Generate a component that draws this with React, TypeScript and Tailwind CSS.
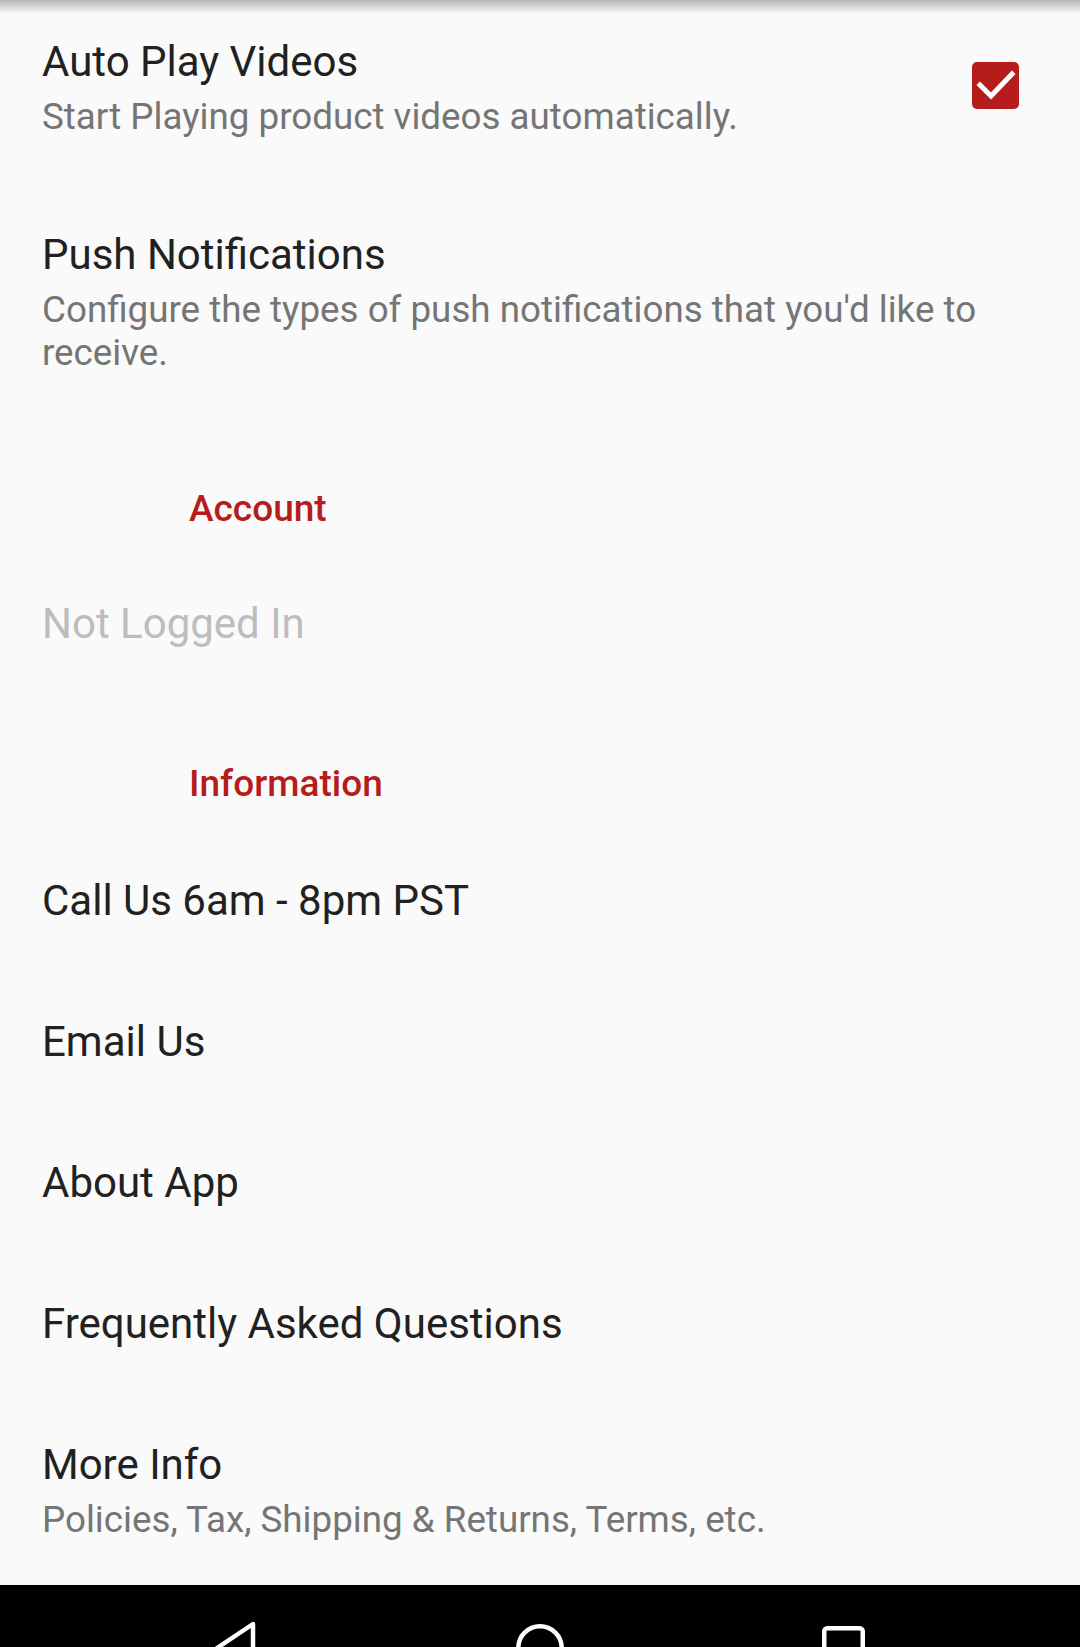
import React from "react";

function Title({ children, muted = false }: { children: React.ReactNode; muted?: boolean }) {
  return (
    <div className={`text-[42px] leading-[49px] ${muted ? "text-[#bdbdbd]" : "text-[#212121]"}`}>
      {children}
    </div>
  );
}

function Summary({ children }: { children: React.ReactNode }) {
  return <div className="mt-[9px] text-[36.75px] leading-[43px] text-[#757575]">{children}</div>;
}

function Category({ children, pt, pb }: { children: React.ReactNode; pt: string; pb: string }) {
  return (
    <div className={`${pt} ${pb} pl-[189px] text-[37px] leading-[43px] font-medium text-[#b71c1c]`}>
      {children}
    </div>
  );
}

function Item({ title }: { title: string }) {
  return (
    <div className="pl-[42px] pr-[100px] pt-[46px] pb-[46px]">
      <Title>{title}</Title>
    </div>
  );
}

export default function App() {
  return (
    <div
      className="relative w-full h-[1647px] overflow-hidden bg-[#fafafa] flex flex-col"
      style={{ fontFamily: "Roboto, 'Noto Sans', sans-serif" }}
    >
      <div className="absolute top-0 left-0 right-0 h-[14px] bg-gradient-to-b from-[rgba(0,0,0,0.28)] to-transparent" />

      {/* Auto Play Videos */}
      <div className="flex pl-[42px] pt-[37px] pb-[46px]">
        <div className="flex-1">
          <Title>Auto Play Videos</Title>
          <Summary>Start Playing product videos automatically.</Summary>
        </div>
        <div className="mt-[25px] mr-[61px] w-[47px] h-[47px] rounded-[5px] bg-[#b71c1c] flex items-center justify-center">
          <svg width="47" height="47" viewBox="0 0 47 47">
            <path d="M8 23 L19 34 L40 12" fill="none" stroke="#ffffff" strokeWidth="5" strokeLinecap="square" strokeLinejoin="miter" />
          </svg>
        </div>
      </div>

      {/* Push Notifications */}
      <div className="pl-[42px] pr-[100px] pt-[46px] pb-[46px]">
        <Title>Push Notifications</Title>
        <Summary>Configure the types of push notifications that you'd like to receive.</Summary>
      </div>

      <Category pt="pt-[67px]" pb="pb-[23px]">Account</Category>

      <div className="pl-[42px] pt-[46px] pb-[46px]">
        <Title muted>Not Logged In</Title>
      </div>

      <Category pt="pt-[68px]" pb="pb-[25px]">Information</Category>

      <Item title="Call Us 6am - 8pm PST" />
      <Item title="Email Us" />
      <Item title="About App" />
      <Item title="Frequently Asked Questions" />
      <div className="pl-[42px] pr-[100px] pt-[46px] pb-[44px]">
        <Title>More Info</Title>
        <Summary>Policies, Tax, Shipping &amp; Returns, Terms, etc.</Summary>
      </div>

      {/* Navigation bar */}
      <div className="shrink-0 h-[126px] bg-black flex items-center justify-center gap-[240px]">
        <svg width="64" height="64" viewBox="0 0 64 64">
          <path d="M49 8 L13 32 L49 56 Z" fill="none" stroke="#ffffff" strokeWidth="4.5" strokeLinejoin="round" />
        </svg>
        <svg width="64" height="64" viewBox="0 0 64 64">
          <circle cx="32" cy="32" r="21.75" fill="none" stroke="#ffffff" strokeWidth="4.5" />
        </svg>
        <svg width="64" height="64" viewBox="0 0 64 64">
          <rect x="12.25" y="12.25" width="38.5" height="38.5" rx="3" fill="none" stroke="#ffffff" strokeWidth="4.5" />
        </svg>
      </div>
    </div>
  );
}
